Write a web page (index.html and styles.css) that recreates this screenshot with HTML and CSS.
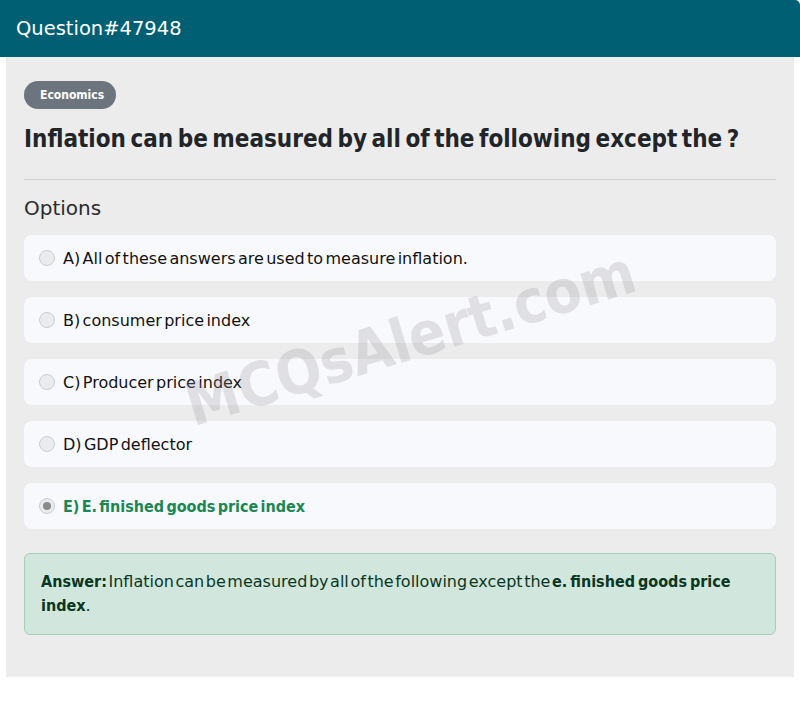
FILE: index.html
```html
<!DOCTYPE html>
<html>
<head>
<meta charset="utf-8">
<link rel="stylesheet" href="styles.css">
</head>
<body>
<div class="card">
  <div class="card-header">Question#47948</div>
  <div class="card-body">
    <span class="badge">Economics</span>
    <h1 class="question">Inflation can be measured by all of the following except the ?</h1>
    <hr class="divider">
    <h2 class="options-title">Options</h2>
    <div class="options">
      <label class="option"><span class="radio"></span><span class="opt-text">A) All of these answers are used to measure inflation.</span></label>
      <label class="option"><span class="radio"></span><span class="opt-text">B) consumer price index</span></label>
      <label class="option"><span class="radio"></span><span class="opt-text">C) Producer price index</span></label>
      <label class="option"><span class="radio"></span><span class="opt-text">D) GDP deflector</span></label>
      <label class="option correct"><span class="radio checked"></span><span class="opt-text">E) E. finished goods price index</span></label>
    </div>
    <div class="answer"><strong class="strong">Answer:</strong> Inflation can be measured by all of the following except the <strong class="strong">e. finished goods price index</strong>.</div>
    <div class="watermark">MCQsAlert.com</div>
  </div>
</div>
</body>
</html>
```
FILE: styles.css
```css
* { box-sizing: border-box; }
html, body { margin: 0; padding: 0; background: #fff; }
body { font-family: "DejaVu Sans", sans-serif; color: #212529; }
.card { width: 800px; }
.card-header {
  height: 57px;
  background: #005f73;
  color: #fff;
  font-size: 19.5px;
  padding: 17px 16px 0;
  line-height: 24px;
  border-top-right-radius: 5px;
}
.card-body {
  position: relative;
  margin: 0 6px;
  background: #ececec;
  padding: 24px 18px 42px;
  height: 620px;
  overflow: hidden;
}
.badge {
  display: inline-block;
  background: #6c757d;
  color: #fff;
  font-family: "DejaVu Sans Condensed", "DejaVu Sans", sans-serif;
  font-stretch: condensed;
  font-size: 12px;
  font-weight: bold;
  line-height: 28px;
  height: 28px;
  padding: 0 12px 0 16px;
  border-radius: 14px;
}
.question {
  margin: 14px 0 0;
  font-family: "DejaVu Sans Condensed", "DejaVu Sans", sans-serif;
  font-stretch: condensed;
  font-size: 24px;
  font-weight: bold;
  line-height: 32px;
  word-spacing: -3px;
}
.divider {
  border: 0;
  border-top: 1px solid #cfcfcf;
  margin: 24px 0 16px;
}
.options-title {
  margin: 0;
  font-size: 20px;
  font-weight: normal;
  line-height: 24px;
  color: #2b2b2b;
}
.options {
  margin-top: 15px;
  display: flex;
  flex-direction: column;
  gap: 16px;
}
.option {
  display: flex;
  align-items: center;
  height: 46px;
  background: #f8f9fc;
  border-radius: 8px;
  padding: 0 15px;
  font-size: 16px;
  word-spacing: -2.7px;
  color: #111;
}
.radio {
  width: 16px;
  height: 16px;
  border-radius: 50%;
  border: 1px solid #cdcdcd;
  background: #eaebed;
  margin-right: 8px;
  flex: none;
  display: flex;
  align-items: center;
  justify-content: center;
}
.radio.checked::after {
  content: "";
  width: 8px;
  height: 8px;
  border-radius: 50%;
  background: #8a8a8a;
}
.option.correct {
  color: #198754;
  font-weight: bold;
  font-family: "DejaVu Sans Condensed", "DejaVu Sans", sans-serif;
  font-stretch: condensed;
}
.answer {
  margin-top: 24px;
  background: #d1e7dd;
  border: 1px solid #a3cfbb;
  border-radius: 6px;
  color: #0a3622;
  padding: 16px;
  font-size: 16px;
  line-height: 24px;
  word-spacing: -3.5px;
}
.strong {
  font-family: "DejaVu Sans Condensed", "DejaVu Sans", sans-serif;
  font-stretch: condensed;
  word-spacing: -2px;
}
.watermark {
  position: absolute;
  left: 190px;
  top: 318px;
  font-family: "DejaVu Sans Condensed", "DejaVu Sans", sans-serif;
  font-stretch: condensed;
  font-weight: bold;
  font-size: 60px;
  line-height: 1;
  color: rgba(150, 150, 160, 0.26);
  transform: rotate(-17deg);
  transform-origin: left bottom;
  white-space: nowrap;
  pointer-events: none;
}
```
